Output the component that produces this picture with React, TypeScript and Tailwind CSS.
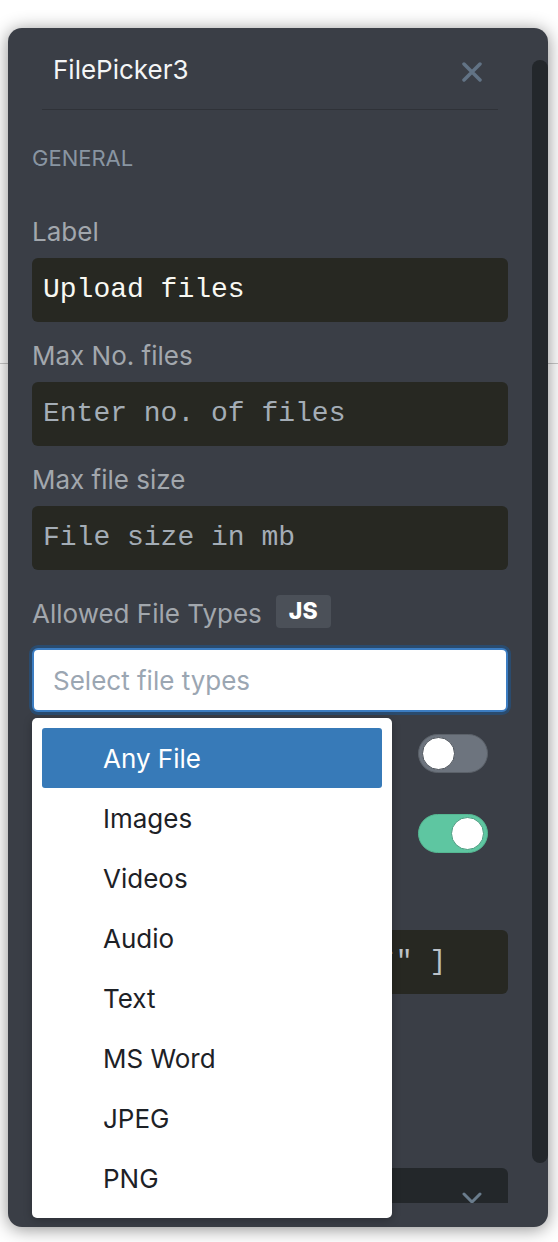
import React from 'react';

const fileTypes = ['Any File', 'Images', 'Videos', 'Audio', 'Text', 'MS Word', 'JPEG', 'PNG'];

const Label = ({ children, className = '' }: { children: React.ReactNode; className?: string }) => (
  <div className={`text-[26px] leading-8 text-[#a2a7ad] ${className}`}>{children}</div>
);

const CodeInput = ({ value, placeholder, className = '' }: { value?: string; placeholder?: string; className?: string }) => (
  <div className={`h-16 rounded-[6px] bg-[#272822] flex items-center pl-[11px] font-['Liberation_Mono',monospace] text-[28px] whitespace-pre ${className}`}>
    {value ? <span className="text-[#f8f8f2]">{value}</span> : <span className="text-[#a4adb6]">{placeholder}</span>}
  </div>
);

const Toggle = ({ on }: { on: boolean }) => (
  <div
    className={`w-[70px] h-[39px] rounded-full flex items-center px-[3px] border ${
      on ? 'bg-[#5ec6a1] border-[#55b792] justify-end' : 'bg-[#6d747e] border-[#5b6169] justify-start'
    }`}
  >
    <div className={`w-[33px] h-[33px] rounded-full bg-white border ${on ? 'border-[#4a9c80]' : 'border-[#4f555d]'}`} />
  </div>
);

export default function App() {
  return (
    <div className="relative w-full h-[1242px] bg-white overflow-hidden font-['Inter',sans-serif]">
      {/* page behind the dialog */}
      <div className="absolute left-0 right-0 top-[363px] h-px bg-[#c9c9c9]" />

      <div className="absolute left-[8px] top-[28px] w-[540px] h-[1199px] rounded-[14px] bg-[#3a3e46] shadow-[0_2px_18px_rgba(0,0,0,0.45)] flex">
        <div className="ml-[24px] w-[476px] flex flex-col">
          {/* header */}
          <div className="mx-[10px] pl-[11px] pr-[16px] pt-[26px] pb-[23px] border-b border-[#2f3238] flex items-center justify-between">
            <span className="text-[26px] leading-8 text-[#f4f5f6]">FilePicker3</span>
            <svg className="mt-[4px]" width="20" height="20" viewBox="0 0 20 20" stroke="#627385" strokeWidth="3.5" strokeLinecap="round">
              <path d="M2 2 L18 18 M18 2 L2 18" />
            </svg>
          </div>

          <div className="mt-[34px] text-[22px] leading-7 text-[#8995a2]">GENERAL</div>

          <Label className="mt-[44px]">Label</Label>
          <CodeInput className="mt-[10px]" value="Upload files" />

          <Label className="mt-[18px]">Max No. files</Label>
          <CodeInput className="mt-[10px]" placeholder="Enter no. of files" />

          <Label className="mt-[18px]">Max file size</Label>
          <CodeInput className="mt-[10px]" placeholder="File size in mb" />

          <div className="mt-[28px] flex items-start gap-[14px]">
            <Label>Allowed File Types</Label>
            <span className="-mt-[3px] h-[33px] px-[13px] rounded-[4px] bg-[#4b5058] text-white font-extrabold text-[23px] flex items-center">JS</span>
          </div>

          {/* select with open menu */}
          <div className="relative mt-[18px]">
            <div className="h-16 rounded-[6px] border-2 border-[#3c7dc2] bg-white shadow-[0_0_0_3px_rgba(40,78,118,0.85)] flex items-center pl-[19px]">
              <span className="text-[26px] text-[#9ba6b2]">Select file types</span>
            </div>
            <div className="absolute z-10 left-0 top-[calc(100%+6px)] w-[360px] bg-white rounded-[5px] p-[10px] shadow-[0_2px_8px_rgba(0,0,0,0.25)]">
              {fileTypes.map((t, i) => (
                <div
                  key={t}
                  className={`h-[60px] flex items-center pl-[61px] text-[26px] rounded-[3px] ${
                    i === 0 ? 'bg-[#377ab8] text-white' : 'text-[#1d2126]'
                  }`}
                >
                  {t}
                </div>
              ))}
            </div>
          </div>

          <div className="mt-[22px] flex justify-end pr-[20px]">
            <Toggle on={false} />
          </div>
          <div className="mt-[41px] flex justify-end pr-[20px]">
            <Toggle on={true} />
          </div>

          <div className="mt-[77px] h-16 rounded-[6px] bg-[#272822] flex items-center pl-[11px] font-['Liberation_Mono',monospace] text-[28px] whitespace-pre text-[#bcc2c8]">
            {'[ "image/*", "video/*" ]'}
          </div>

          <div className="mt-[174px] h-[35px] overflow-hidden rounded-t-[6px] bg-[#23272a]">
            <div className="h-16 flex items-start justify-end pt-[24px] pr-[26px]">
              <svg width="20" height="12" viewBox="0 0 20 12" fill="none" stroke="#6a7c8c" strokeWidth="3" strokeLinecap="round" strokeLinejoin="round">
                <path d="M2 2 L10 10 L18 2" />
              </svg>
            </div>
          </div>
        </div>

        {/* scrollbar */}
        <div className="ml-[24px] mt-[32px] w-4 h-[1103px] rounded-full bg-[#23272b]" />
      </div>
    </div>
  );
}
